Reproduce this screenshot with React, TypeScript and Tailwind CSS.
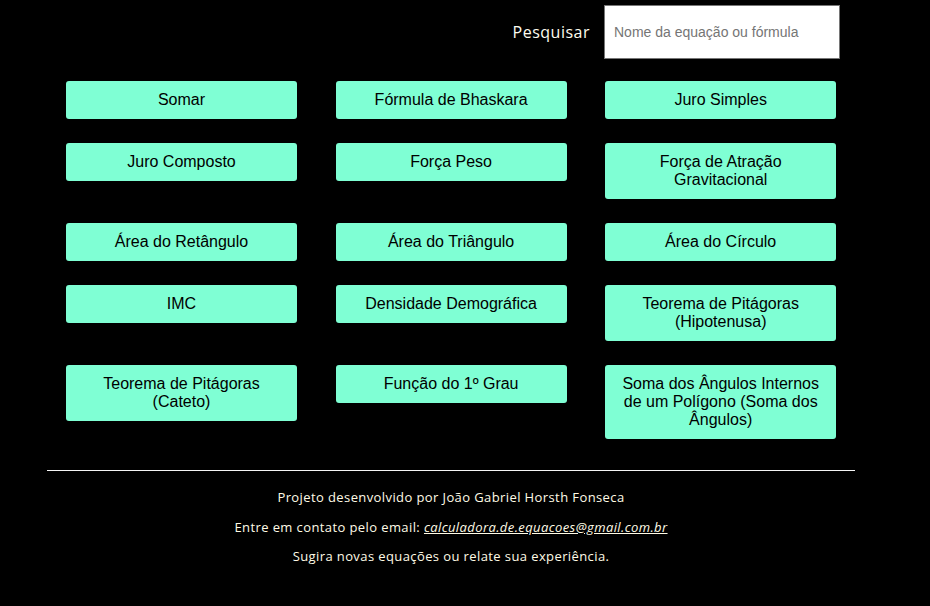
import React from 'react';

const equations = [
  'Somar',
  'Fórmula de Bhaskara',
  'Juro Simples',
  'Juro Composto',
  'Força Peso',
  'Força de Atração Gravitacional',
  'Área do Retângulo',
  'Área do Triângulo',
  'Área do Círculo',
  'IMC',
  'Densidade Demográfica',
  'Teorema de Pitágoras (Hipotenusa)',
  'Teorema de Pitágoras (Cateto)',
  'Função do 1º Grau',
  'Soma dos Ângulos Internos de um Polígono (Soma dos Ângulos)',
];

const App: React.FC = () => {
  return (
    <div className="min-h-[606px] bg-black">
      <div className="w-[902px]">
        <div className="flex items-center justify-end pt-[5px] pr-[62px]">
          <span className="mr-[14px] text-[16px] tracking-[0.5px] text-[#fffdf0] font-['Open_Sans',sans-serif]">Pesquisar</span>
          <input
            className="h-[54px] w-[236px] border border-[#767676] bg-white px-[9px] text-[14px] font-['Liberation_Sans',Arial,sans-serif] text-black placeholder:text-[#757575] outline-none"
            placeholder="Nome da equação ou fórmula"
          />
        </div>

        <div className="mt-[22px] ml-[66px] grid w-[770px] grid-cols-[231px_231px_231px] items-start gap-x-[38.6px] gap-y-[24px]">
          {equations.map((name) => (
            <button
              key={name}
              className="rounded-[3px] bg-[#7fffd4] px-[14px] py-[10px] text-center text-[16px] leading-[18px] text-black font-['Liberation_Sans',Arial,sans-serif]"
            >
              {name}
            </button>
          ))}
        </div>

        <hr className="mx-[47px] mt-[31px] border-t border-[#f5f5f5]" />

        <footer className="mt-[18px] flex flex-col items-center gap-[12.5px] text-[13px] leading-[17px] tracking-[0.4px] text-[#fffbe6] font-['Open_Sans',sans-serif]">
          <p>Projeto desenvolvido por João Gabriel Horsth Fonseca</p>
          <p>
            Entre em contato pelo email:{' '}
            <a href="#" className="italic underline">calculadora.de.equacoes@gmail.com.br</a>
          </p>
          <p>Sugira novas equações ou relate sua experiência.</p>
        </footer>
      </div>
    </div>
  );
};

export default App;
